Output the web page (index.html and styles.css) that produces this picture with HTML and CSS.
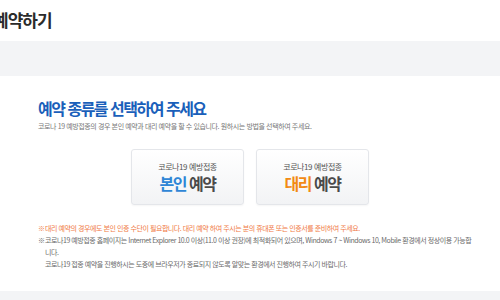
FILE: index.html
```html
<!DOCTYPE html>
<html lang="ko">
	<head>
		<meta charset="utf-8">
		<title>예약하기</title>
		<link rel="stylesheet" href="styles.css">
	</head>
	<body>
		<header class="top">
			<h1 class="page-title">예약하기</h1>
		</header>
		<div class="band"></div>
		<main class="content">
			<h2 class="title">예약 종류를 선택하여 주세요</h2>
			<p class="desc">코로나 19 예방접종의 경우 본인 예약과 대리 예약을 할 수 있습니다. 원하시는 방법을 선택하여 주세요.</p>
			<div class="choices">
				<a class="choice" href="#">
					<span class="choice-sub">코로나19 예방접종</span>
					<span class="choice-main"><em class="self">본인</em> 예약</span>
				</a>
				<a class="choice" href="#">
					<span class="choice-sub">코로나19 예방접종</span>
					<span class="choice-main"><em class="proxy">대리</em> 예약</span>
				</a>
			</div>
			<ul class="notes">
				<li class="warn">대리 예약의 경우에도 본인 인증 수단이 필요합니다. 대리 예약 하여 주시는 분의 휴대폰 또는 인증서를 준비하여 주세요.</li>
				<li>코로나19 예방접종 홈페이지는 Internet Explorer 10.0 이상(11.0 이상 권장)에 최적화되어 있으며, Windows 7 ~ Windows 10, Mobile 환경에서 정상이용 가능합니다.</li>
				<li class="plain">코로나19 접종 예약을 진행하시는 도중에 브라우저가 종료되지 않도록 알맞는 환경에서 진행하여 주시기 바랍니다.</li>
			</ul>
		</main>
		<div class="band bottom"></div>
	</body>
</html>
```

FILE: styles.css
```css
*{
	margin: 0;
	padding: 0;
	box-sizing: border-box;
}
body{
	font-family: "Noto Sans CJK KR", "Noto Sans", sans-serif;
	color: #333;
	background: #fff;
	overflow: hidden;
}
/* 상단 */
.top{
	height: 41px;
	display: flex;
	align-items: center;
}
.page-title{
	font-size: 17px;
	line-height: 20px;
	font-weight: 700;
	letter-spacing: -1px;
	color: #2b2b2b;
	margin: -2px 0 0 -7px;
}
.band{
	height: 35px;
	background: #f3f4f6;
}
.band.bottom{
	height: 20px;
}
/* 본문 */
.content{
	width: 424px;
	margin: 0 auto;
	padding: 22px 0 21px;
}
.title{
	font-size: 16px;
	line-height: 20px;
	font-weight: 700;
	letter-spacing: -1.5px;
	color: #1a5fba;
}
.desc{
	margin-top: 3px;
	font-size: 7px;
	line-height: 10px;
	letter-spacing: -0.4px;
	color: #777;
}
.choices{
	display: flex;
	justify-content: center;
	gap: 12px;
	margin-top: 18px;
}
.choice{
	width: 113px;
	height: 56px;
	display: flex;
	flex-direction: column;
	align-items: center;
	justify-content: center;
	border: 1px solid #e4e6ea;
	border-radius: 3px;
	background: linear-gradient(#fff, #f2f3f5);
	box-shadow: 0 1px 2px rgba(0,0,0,0.04);
	text-decoration: none;
	color: #444;
}
.choice-sub{
	font-size: 8px;
	line-height: 10px;
	letter-spacing: -0.4px;
	color: #555;
}
.choice-main{
	margin-top: 1px;
	font-size: 16px;
	line-height: 20px;
	font-weight: 700;
	letter-spacing: -1.5px;
	color: #4a4a4a;
}
.choice-main em{
	font-style: normal;
}
.self{
	color: #2f86d6;
}
.proxy{
	color: #f28a14;
}
/* 안내 */
.notes{
	list-style: none;
	margin-top: 17px;
	width: 434px;
}
.notes li{
	position: relative;
	padding-left: 7px;
	font-size: 7px;
	line-height: 12px;
	letter-spacing: -0.45px;
	color: #6a6a6a;
}
.notes li::before{
	content: "※";
	position: absolute;
	left: 0;
	top: 0;
}
.notes li.warn{
	color: #f07a45;
}
.notes li.plain::before{
	content: none;
}
```
